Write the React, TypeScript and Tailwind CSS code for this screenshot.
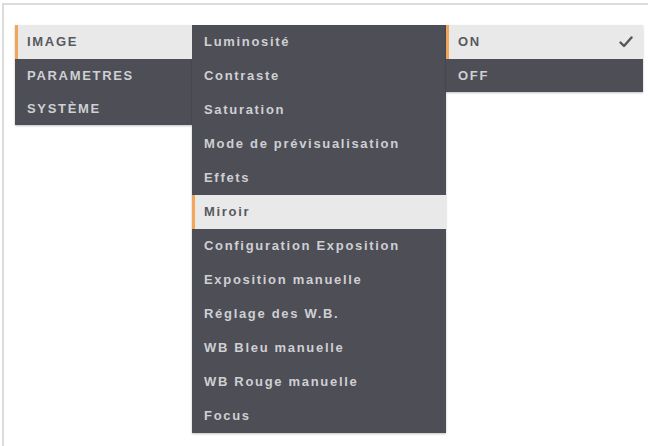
import React from 'react';

const MAIN = ['IMAGE', 'PARAMETRES', 'SYSTÈME'];

const SUB = [
  'Luminosité',
  'Contraste',
  'Saturation',
  'Mode de prévisualisation',
  'Effets',
  'Miroir',
  'Configuration Exposition',
  'Exposition manuelle',
  'Réglage des W.B.',
  'WB Bleu manuelle',
  'WB Rouge manuelle',
  'Focus',
];

const OPTIONS = ['ON', 'OFF'];

const font = { fontFamily: '"Liberation Sans", Arial, sans-serif' };

function Row({ label, active, height, pad, check }: { label: string; active: boolean; height: string; pad: string; check?: boolean }) {
  return (
    <div
      className={`relative flex items-center ${height} ${pad} text-[13px] font-bold tracking-[0.13em] ${
        active ? 'bg-[#e9e9ea] text-[#58595e]' : 'text-[#cfd0d3]'
      }`}
    >
      {active && <span className="absolute left-0 top-0 bottom-0 w-[3px] bg-[#f2a65a]" />}
      <span>{label}</span>
      {check && (
        <svg className="ml-auto mr-[10px]" width="14" height="12" viewBox="0 0 14 12">
          <path d="M1.5 6.5 L5 10 L12.5 1.5" fill="none" stroke="#55565b" strokeWidth="2.4" strokeLinecap="round" strokeLinejoin="round" />
        </svg>
      )}
    </div>
  );
}

export default function App() {
  return (
    <div className="w-[648px] h-[446px] bg-white overflow-hidden" style={font}>
      <div className="ml-[2px] mt-[3px] h-[443px] border-t-2 border-l-2 border-[#dcdcdc] pl-[11px] pt-[20px] flex items-start">
        {/* main categories */}
        <div className="w-[177px] bg-[#4d4e56] shadow-[0_1px_2px_rgba(0,0,0,0.25)]">
          {MAIN.map((m, i) => (
            <Row key={m} label={m} active={i === 0} height={i === 0 ? 'h-[34px]' : 'h-[33px]'} pad="pl-[12px]" />
          ))}
        </div>

        {/* image settings */}
        <div className="w-[254px] bg-[#4d4e56] shadow-[0_1px_2px_rgba(0,0,0,0.25)]">
          {SUB.map((s) => (
            <Row key={s} label={s} active={s === 'Miroir'} height="h-[34px]" pad="pl-[12px]" />
          ))}
        </div>

        {/* mirror options */}
        <div className="w-[197px] bg-[#4d4e56] shadow-[0_1px_2px_rgba(0,0,0,0.25)]">
          {OPTIONS.map((o, i) => (
            <Row key={o} label={o} active={i === 0} check={i === 0} height={i === 0 ? 'h-[34px]' : 'h-[33px]'} pad="pl-[12px]" />
          ))}
        </div>
      </div>
    </div>
  );
}
